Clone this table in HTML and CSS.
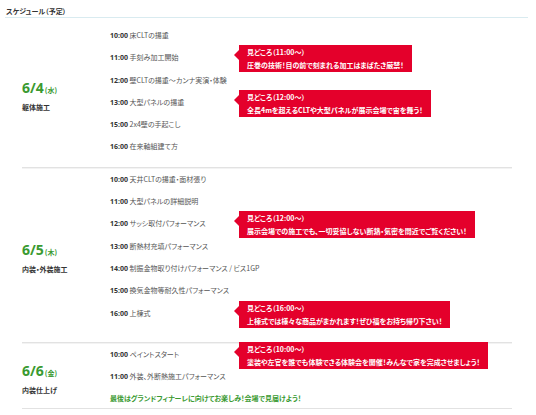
FILE: index.html
```html
<!DOCTYPE html>
<html lang="ja">
<head>
<meta charset="utf-8">
<link rel="stylesheet" href="styles.css">
</head>
<body>
<div class="page">
  <h2 class="title">スケジュール（予定）</h2>

  <section class="day day--first">
    <div class="day-head">
      <div class="date">6/4<span class="dow">(水)</span></div>
      <div class="phase">躯体施工</div>
    </div>
    <ul class="items">
      <li class="item"><b>10:00</b> 床CLTの揚重</li>
      <li class="item"><b>11:00</b> 手刻み加工開始
        <div class="tip">見どころ（11:00〜）<br>圧巻の技術！目の前で刻まれる加工はまばたき厳禁！</div></li>
      <li class="item"><b>12:00</b> 壁CLTの揚重〜カンナ実演・体験</li>
      <li class="item"><b>13:00</b> 大型パネルの揚重
        <div class="tip">見どころ（12:00〜）<br>全長4mを超えるCLTや大型パネルが展示会場で宙を舞う！</div></li>
      <li class="item"><b>15:00</b> 2x4壁の手起こし</li>
      <li class="item"><b>16:00</b> 在来軸組建て方</li>
    </ul>
  </section>

  <section class="day day--second">
    <div class="day-head">
      <div class="date">6/5<span class="dow">(木)</span></div>
      <div class="phase">内装・外装施工</div>
    </div>
    <ul class="items">
      <li class="item"><b>10:00</b> 天井CLTの揚重・面材張り</li>
      <li class="item"><b>11:00</b> 大型パネルの詳細説明</li>
      <li class="item"><b>12:00</b> サッシ取付パフォーマンス
        <div class="tip">見どころ（12:00〜）<br>展示会場での施工でも、一切妥協しない断熱・気密を間近でご覧ください！</div></li>
      <li class="item"><b>13:00</b> 断熱材充填パフォーマンス</li>
      <li class="item"><b>14:00</b> 制振金物取り付けパフォーマンス / ビス1GP</li>
      <li class="item"><b>15:00</b> 換気金物等耐久性パフォーマンス</li>
      <li class="item"><b>16:00</b> 上棟式
        <div class="tip">見どころ（16:00〜）<br>上棟式では様々な商品がまかれます！ぜひ福をお持ち帰り下さい！</div></li>
    </ul>
  </section>

  <section class="day day--third">
    <div class="day-head">
      <div class="date">6/6<span class="dow">(金)</span></div>
      <div class="phase">内装仕上げ</div>
    </div>
    <ul class="items">
      <li class="item"><b>10:00</b> ペイントスタート
        <div class="tip">見どころ（10:00〜）<br>塗装や左官を誰でも体験できる体験会を開催！みんなで家を完成させましょう！</div></li>
      <li class="item"><b>11:00</b> 外装、外断熱施工パフォーマンス</li>
      <li class="item item--finale">最後はグランドフィナーレに向けてお楽しみ！会場で見届けよう！</li>
    </ul>
  </section>
</div>
</body>
</html>
```

FILE: styles.css
```css
body {
  margin: 0;
  background: #fff;
  font-family: "Noto Sans CJK JP", "Noto Sans", sans-serif;
  font-feature-settings: "palt";
}

.page {
  padding: 0 8px 0 5px;
}

.title {
  margin: 0;
  padding: 6px 0 1px 1px;
  font-size: 7px;
  line-height: 10px;
  font-weight: bold;
  color: #333;
  border-bottom: 1px solid #d9ebf0;
}

.day {
  display: flex;
  margin: 0 16px 0 17px;
  border-bottom: 1px solid #e2e2e2;
  box-shadow: 0 1px 0 #f3f3f3;
}

.day-head {
  width: 88px;
  flex: none;
  display: flex;
  flex-direction: column;
  justify-content: center;
  padding-top: 8px;
  box-sizing: border-box;
}

.date {
  font-family: "Open Sans", "Noto Sans", sans-serif;
  font-weight: bold;
  font-size: 14px;
  line-height: 18px;
  color: #3a9a31;
  margin-bottom: 1px;
}

.dow {
  font-family: "Noto Sans CJK JP", sans-serif;
  font-size: 7px;
  margin-left: 1px;
}

.phase {
  font-size: 7px;
  line-height: 14px;
  font-weight: bold;
  color: #333;
}

.items {
  list-style: none;
  margin: 0;
  padding: 0;
  flex: 1;
}

.day--first .items { padding: 6px 0 9px; }
.day--second .items { padding: 0 0 18px; }
.day--third .items { padding: 0; }

.item {
  position: relative;
  height: 22.3px;
  line-height: 22.3px;
  font-size: 7px;
  color: #555;
  white-space: nowrap;
}

.item b {
  color: #333;
  font-weight: bold;
  font-family: "Open Sans", "Noto Sans", sans-serif;
}

.item--finale {
  color: #3a9a31;
  font-weight: bold;
  height: 21px;
}

.tip {
  position: absolute;
  left: 129px;
  top: -1px;
  background: #e4002b;
  color: #fff;
  font-weight: bold;
  font-size: 7px;
  line-height: 13px;
  padding: 1px 8px 0;
  white-space: nowrap;
}

.tip::before {
  content: "";
  position: absolute;
  left: -5px;
  top: 5px;
  border-style: solid;
  border-width: 5px 5px 5px 0;
  border-color: transparent #e4002b transparent transparent;
}
```
